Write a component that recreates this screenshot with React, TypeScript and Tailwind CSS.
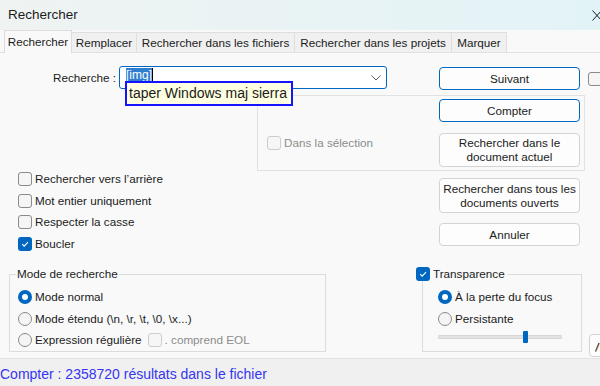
import React from "react";

function Box({ checked = false, disabled = false }: { checked?: boolean; disabled?: boolean }) {
  if (checked) {
    return (
      <span className="w-[14px] h-[14px] shrink-0 rounded-[3px] bg-[#0067c0] flex items-center justify-center">
        <svg width="10" height="10" viewBox="0 0 10 10">
          <path d="M2.2 5.2 L4.2 7.2 L8 3.2" stroke="white" strokeWidth="1.1" fill="none" />
        </svg>
      </span>
    );
  }
  return (
    <span
      className={
        disabled
          ? "block w-[14px] h-[14px] shrink-0 rounded-[3px] border border-[#cdcdcd] bg-[#f6f6f6]"
          : "block w-[14px] h-[14px] shrink-0 rounded-[3px] border border-[#8a8a8a] bg-[#f5f5f5]"
      }
    />
  );
}

function Radio({ checked = false }: { checked?: boolean }) {
  if (checked) {
    return (
      <span className="w-[14px] h-[14px] shrink-0 rounded-full bg-[#0067c0] flex items-center justify-center">
        <span className="w-[6px] h-[6px] rounded-full bg-white" />
      </span>
    );
  }
  return <span className="block w-[14px] h-[14px] shrink-0 rounded-full border border-[#8a8a8a] bg-[#f5f5f5]" />;
}

function Btn({
  children,
  primary = false,
  h,
}: {
  children: React.ReactNode;
  primary?: boolean;
  h: string;
}) {
  return (
    <div
      className={
        (primary ? "border-[#0067c0] " : "border-[#d3d3d3] ") +
        h +
        " w-[141px] shrink-0 border rounded-[4px] bg-[#fdfdfd] flex items-center justify-center text-center leading-[14px] text-[#1b1b1b]"
      }
    >
      {children}
    </div>
  );
}

export default function App() {
  return (
    <div className="w-[600px] h-[386px] overflow-hidden flex flex-col font-['Liberation_Sans',Arial,sans-serif] text-[11.7px] text-[#1b1b1b] bg-[#f9f9f9]">
      {/* Title bar */}
      <div className="h-[30px] shrink-0 flex items-center pl-[8px] bg-[linear-gradient(to_right,#eff3f2,#e2f3f7)]">
        <span className="text-[13.5px]">Rechercher</span>
        <svg className="ml-auto -mr-[2px] shrink-0" width="10" height="11" viewBox="0 0 10 11">
          <path d="M0.5 0.5 L9.5 10.5 M9.5 0.5 L0.5 10.5" stroke="#1b1b1b" strokeWidth="1" />
        </svg>
      </div>

      {/* Tabs */}
      <div className="h-[22px] shrink-0 flex items-end pl-[4px] bg-[#f9f9f9]">
        <div className="relative z-10 -mb-[1px] w-[68px] h-[23px] shrink-0 bg-[#f9f9f9] border-l border-t border-r border-[#dcdcdc] flex items-center justify-center pb-[1px]">
          Rechercher
        </div>
        <div className="w-[65px] h-[20px] shrink-0 bg-[#f0f0f0] border-t border-r border-[#dedede] flex items-center justify-center pt-[1px]">
          Remplacer
        </div>
        <div className="w-[158px] h-[20px] shrink-0 bg-[#f0f0f0] border-t border-r border-[#dedede] flex items-center justify-center pt-[1px]">
          Rechercher dans les fichiers
        </div>
        <div className="w-[157px] h-[20px] shrink-0 bg-[#f0f0f0] border-t border-r border-[#dedede] flex items-center justify-center pt-[1px]">
          Rechercher dans les projets
        </div>
        <div className="w-[55px] h-[20px] shrink-0 bg-[#f0f0f0] border-t border-r border-[#dedede] flex items-center justify-center pt-[1px]">
          Marquer
        </div>
      </div>

      {/* Body */}
      <div className="flex-1 min-h-0 overflow-hidden bg-[#f9f9f9] border-t border-[#e2e2e2] pt-[13px] flex flex-col">
        {/* Row 1 */}
        <div className="h-[24px] shrink-0 flex items-start">
          <div className="w-[116px] shrink-0 text-right leading-[23px]">Recherche :</div>
          <div className="relative ml-[3px] w-[268px] h-[23px] shrink-0 border border-[#0067c0] rounded-[3px] bg-white flex items-start pl-[6px] pt-[1px]">
            <span className="bg-[#2f7fd0] text-white text-[12px] leading-[14px] h-[14px]">[img]</span>
            <span className="w-[1px] h-[14px] bg-black" />
            <svg className="ml-auto mr-[5px] mt-[7px] shrink-0" width="10" height="6" viewBox="0 0 10 6">
              <path d="M0.5 0.5 L5 5 L9.5 0.5" stroke="#5f5f5f" strokeWidth="1" fill="none" />
            </svg>
            <div className="absolute left-[5px] top-[14px] z-20 w-[168px] h-[25px] border-2 border-[#1414ff] bg-[#ffffe1] text-[14px] leading-[21px] pl-[2px] text-[#1b1b1b] whitespace-nowrap">
              taper Windows maj sierra
            </div>
          </div>
          <div className="ml-[52px] mt-[1px] shrink-0">
            <Btn primary h="h-[23px]">Suivant</Btn>
          </div>
          <div className="ml-[8px] mt-[6px] shrink-0">
            <Box />
          </div>
        </div>

        {/* Row 2: transparent box */}
        <div className="mt-[5px] ml-[257px] w-[328px] h-[76px] shrink-0 border border-[#e2e2e2] flex">
          <div className="w-[181px] shrink-0 pl-[9px] pt-[40px]">
            <div className="flex items-center gap-[3px] h-[14px] text-[#8c8c8c]">
              <Box disabled />
              <span>Dans la sélection</span>
            </div>
          </div>
          <div className="flex flex-col pt-[3px] gap-[11px]">
            <Btn primary h="h-[23px]">Compter</Btn>
            <Btn h="h-[34px]">
              Rechercher dans le
              <br />
              document actuel
            </Btn>
          </div>
        </div>

        {/* Row 3 */}
        <div className="flex shrink-0">
          <div className="ml-[18px] w-[421px] shrink-0 mt-[1px] flex flex-col gap-[7.5px]">
            <div className="flex items-center gap-[3px] h-[14px]">
              <Box />
              <span>Rechercher vers l’arrière</span>
            </div>
            <div className="flex items-center gap-[3px] h-[14px]">
              <Box />
              <span>Mot entier uniquement</span>
            </div>
            <div className="flex items-center gap-[3px] h-[14px]">
              <Box />
              <span>Respecter la casse</span>
            </div>
            <div className="flex items-center gap-[3px] h-[14px]">
              <Box checked />
              <span>Boucler</span>
            </div>
          </div>
          <div className="mt-[7px] flex flex-col gap-[10px] shrink-0">
            <Btn h="h-[35px]">
              Rechercher dans tous les
              <br />
              documents ouverts
            </Btn>
            <Btn h="h-[23px]">Annuler</Btn>
          </div>
        </div>

        {/* Groups */}
        <div className="mt-[16.5px] flex items-start shrink-0">
          <fieldset className="ml-[9px] w-[317px] shrink-0 border border-[#dcdcdc] pl-[6px] pb-[4px]">
            <legend className="px-[1px] leading-[14px]">Mode de recherche</legend>
            <div className="pt-[9px] pl-[2px] flex flex-col gap-[7.5px]">
              <div className="flex items-center gap-[3px] h-[14px]">
                <Radio checked />
                <span>Mode normal</span>
              </div>
              <div className="flex items-center gap-[3px] h-[14px]">
                <Radio />
                <span>Mode étendu (\n, \r, \t, \0, \x...)</span>
              </div>
              <div className="flex items-center gap-[3px] h-[14px]">
                <Radio />
                <span>Expression régulière</span>
                <span className="ml-[3px] flex">
                  <Box disabled />
                </span>
                <span className="text-[#8c8c8c]">. comprend EOL</span>
              </div>
            </div>
          </fieldset>

          <fieldset className="ml-[96px] w-[160px] shrink-0 border border-[#dcdcdc] pl-0 pb-[8px]">
            <legend className="-ml-[7px] pr-[2px] leading-[14px]">
              <span className="flex items-center gap-[3px]">
                <Box checked />
                <span>Transparence</span>
              </span>
            </legend>
            <div className="pt-[9px] pl-[15px] flex flex-col gap-[7.5px]">
              <div className="flex items-center gap-[3px] h-[14px]">
                <Radio checked />
                <span>À la perte du focus</span>
              </div>
              <div className="flex items-center gap-[3px] h-[14px]">
                <Radio />
                <span>Persistante</span>
              </div>
            </div>
            <div className="relative ml-[15px] mt-[5.5px] w-[124px] h-[12px] flex items-center">
              <div className="w-full h-[4px] bg-[#e4e4e4] border border-[#d6d6d6] rounded-[1px]" />
              <div className="absolute left-[85px] top-0 w-[5px] h-[12px] bg-[#0067c0] rounded-[1px]" />
            </div>
          </fieldset>

          <div className="ml-[7px] mt-[67px] w-[30px] h-[23px] shrink-0 border border-[#d3d3d3] rounded-[4px] bg-[#fdfdfd] pl-[5px] pt-[7px]">
            <svg width="12" height="10" viewBox="0 0 12 10">
              <path d="M0.5 9.5 L4 1" stroke="#3a3a3a" strokeWidth="1.2" fill="none" />
              <path d="M1.2 9.5 L4.6 1.2" stroke="#d9822b" strokeWidth="0.6" fill="none" />
            </svg>
          </div>
        </div>
      </div>

      {/* Status bar */}
      <div className="h-[28px] shrink-0 bg-[#f0f0f0] border-t border-[#e2e2e2] pt-[7px] text-[14px] leading-[16px] text-[#3535f0] whitespace-nowrap">
        Compter : 2358720 résultats dans le fichier
      </div>
    </div>
  );
}
